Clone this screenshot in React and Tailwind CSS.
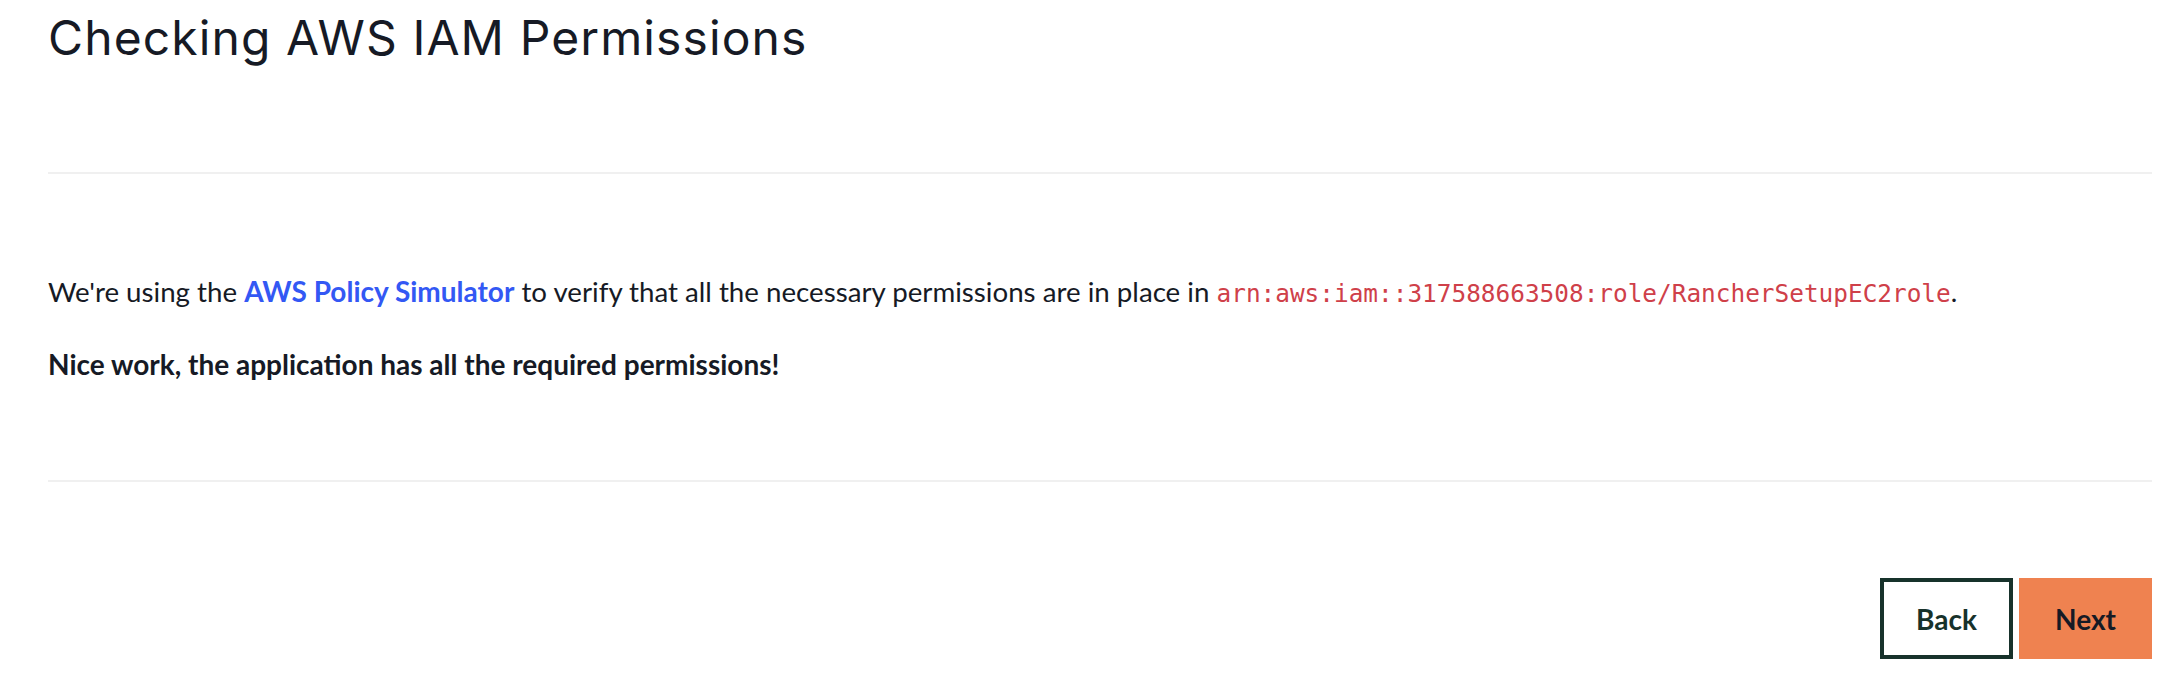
import React from 'react';

export default function App() {
  const arn = 'arn:aws:iam::317588663508:role/RancherSetupEC2role';

  return (
    <div className="min-h-screen bg-white pl-[48px] pr-[30px]">
      <h1
        className="text-[48px] leading-[72px] pt-[2px] tracking-[1.1px] text-[#161a25] font-normal"
        style={{ fontFamily: 'Inter, "Open Sans", sans-serif' }}
      >
        Checking AWS IAM Permissions
      </h1>

      <div className="mt-[98px] h-[2px] bg-[#f0f0f0]" />

      <div
        className="pt-[100px] text-[28px] text-[#161a25]"
        style={{ fontFamily: 'Lato, "Open Sans", sans-serif' }}
      >
        <p className="leading-[34px] text-[27.7px]">
          We're using the{' '}
          <a href="#" className="font-bold text-[#3358f4] text-[28px]">AWS Policy Simulator</a>{' '}
          to verify that all the necessary permissions are in place in{' '}
          <code
            className="text-[24.4px] text-[#cf4049]"
            style={{ fontFamily: '"DejaVu Sans Mono", "Liberation Mono", monospace' }}
          >
            {arn}
          </code>
          .
        </p>
        <p className="mt-[36px] leading-[34px] font-bold">
          Nice work, the application has all the required permissions!
        </p>
      </div>

      <div className="mt-[99px] h-[2px] bg-[#f0f0f0]" />

      <div
        className="mt-[96px] flex justify-end gap-[6px]"
        style={{ fontFamily: 'Lato, "Open Sans", sans-serif' }}
      >
        <button className="w-[133px] h-[81px] border-[4px] border-[#17322b] bg-white text-[28px] font-bold text-[#17322b]">
          Back
        </button>
        <button className="w-[133px] h-[81px] bg-[#ef8250] text-[28px] font-bold text-[#161a25]">
          Next
        </button>
      </div>
    </div>
  );
}
